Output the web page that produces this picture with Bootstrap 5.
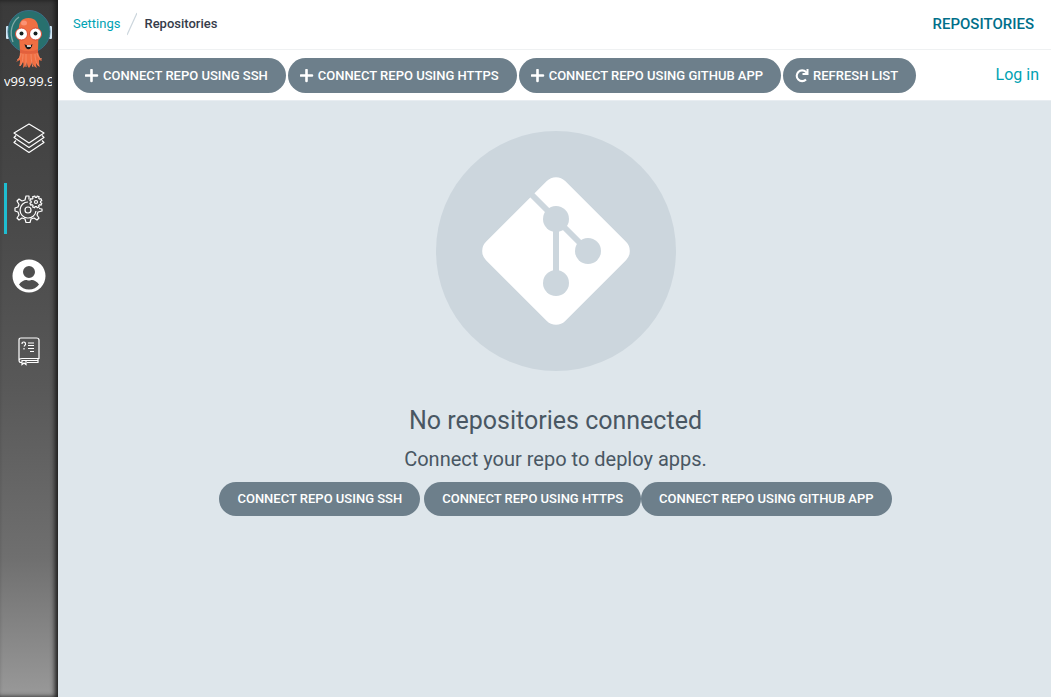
<!DOCTYPE html>
<html lang="en">
<head>
<meta charset="utf-8">
<meta name="viewport" content="width=device-width, initial-scale=1">
<title>Repositories</title>
<link href="https://cdn.jsdelivr.net/npm/bootstrap@5.3.0/dist/css/bootstrap.min.css" rel="stylesheet">
<style>
body { font-family: Roboto, "Liberation Sans", sans-serif; background: #dee6eb; color: #363c4a; line-height: 20px; }
a { color: #00a2b3; text-decoration: none; }
.side { width: 58px; background: linear-gradient(to bottom, #3a3a3a 0%, #484848 30%, #585858 55%, #6f6f6f 80%, #999 100%); box-shadow: inset -3px 0 5px 0 #1b1b1b; }
.side-brand { width: 48px; margin-left: 4px; height: 119px; padding-top: 9px; }
.side-brand svg { display: block; width: 48px; height: 62px; }
.version { font: 13px/20px "Open Sans", sans-serif; color: #fff; white-space: nowrap; }
.side-link { height: 51px; width: 48px; margin-left: 4px; border-left: 3px solid transparent; padding-right: 2px; }
.side-link.active { border-left-color: #1fbdd0; }
.side-list { gap: 20px; margin-top: -7px; }
.topbar { height: 50px; border-bottom: 1px solid #eff1f2; padding: 0 17px 1px 15px; }
.crumbs { font-size: 13px; }
.crumbs svg { margin: 0 7px; }
.crumbs strong { font-weight: 500; }
.page-name { font-size: 15px; font-weight: 500; color: #006f8a; text-transform: uppercase; }
.toolbar { min-height: 51px; border-bottom: 1px solid #e8edf1; padding: 0 12px 0 15px; }
.toolbar-actions { gap: 2px; }
.toolbar .login { font-size: 16px; }
.pill { font-size: 13px; font-weight: 500; line-height: 18px; color: #fff; background: #6d7f8b; border: 0; border-radius: 18px; padding: 8px 18px; text-transform: uppercase; white-space: nowrap; }
.pill:hover { color: #fff; background: #5d6f7b; }
.toolbar .pill { height: 35px; padding: 9px 18px 8px 12px; }
.toolbar .pill svg { width: 14px; height: 14px; margin-right: 4px; }
.empty { color: #495763; padding: 30px 0 0 2px; }
.empty h1 { font-size: 25px; line-height: 30px; font-weight: 400; margin: 35px 0 11px; }
.empty h2 { font-size: 20px; line-height: 24px; font-weight: 400; margin: 0 0 11px; }
</style>
</head>
<body>
<div class="d-flex min-vh-100">
  <nav class="side flex-shrink-0" aria-label="Main">
    <div class="side-brand overflow-hidden">
      <svg viewBox="0 0 48 62" aria-label="Argo">
        <rect x="2" y="17" width="3" height="13" rx="1" fill="#cfe6f5"/>
        <rect x="45" y="17" width="3" height="13" rx="1" fill="#cfe6f5"/>
        <circle cx="25" cy="22.500" r="21" fill="#28706e" stroke="#3b6f88"/>
        <path d="M9 33C5 23 8 13 15 8" fill="none" stroke="#83aaa7" stroke-width="1.300"/>
        <path d="M15 24C14 14 17 9 24.500 9S35 14 34.500 24L34 43c1 4 2 6 4 9l-3-1c0 3 0 5 1 7-3-1-4-3-4-6 0 3 0 5 1 7-3-1-4-3-5-6-1 3-2 5-3 6-2-2-2-4-2-6-1 3-2 5-4 6 0-2 1-4 0-6-1 2-2 4-4 4 1-2 1-4 1-6l-4 2c3-3 4-6 4-10z" fill="#f06f43"/>
        <path d="M17 43c0 5-2 7-4 8m6-6c0 6-1 9-3 12m6-12v13m5-13c0 6 1 10 2 13m2-13c0 6 2 10 4 12m-2-13c1 4 2 6 5 6" fill="none" stroke="#f58a65" stroke-width="1"/>
        <path d="M16 40c5 3 13 3 18 0v4c-5 1-13 1-18 0z" fill="#e2603d"/>
        <ellipse cx="20" cy="14" rx="3" ry="2.500" fill="#fb9274"/>
        <circle cx="17.500" cy="25" r="6" fill="#fff" stroke="#dd4d35"/>
        <circle cx="31.500" cy="25" r="6" fill="#fff" stroke="#dd4d35"/>
        <circle cx="17.500" cy="24.500" r="2" fill="#132020"/><circle cx="31.500" cy="24.500" r="2" fill="#132020"/>
        <path d="M20.500 35c3 2 5 2 8 0-1 7-7 7-8 0z" fill="#15191b"/><path d="M23 36.300h4v1.500h-4z" fill="#fff"/>
      </svg>
      <div class="version">v99.99.99</div>
    </div>
    <div class="side-list d-flex flex-column">
      <a class="side-link d-flex align-items-center justify-content-center" href="#" aria-label="Applications">
        <svg width="34" height="34" viewBox="0 0 34 34" fill="none" stroke="#fff" stroke-width="1.200" stroke-linejoin="round"><path d="M17 3 32 12 17 22 2 12z"/><path d="M4 14.500 2 16.500l15 10 15-10-2-2M4 19.500 2 21.500l15 10 15-10-2-2"/></svg>
      </a>
      <a class="side-link active d-flex align-items-center justify-content-center" href="#" aria-label="Settings">
        <svg width="30" height="30" viewBox="0 0 30 30" fill="none" stroke="#fff" stroke-width="1.200" stroke-linejoin="round"><path d="M15 5.500V2h-3l-1 4-3 1-3-2-2 2 2 3.500L4 13l-3 1v3l3 1 1 3-2 3 2 2 3-2 3 1 1 3.500h4l1-3.500 3-1 3 2 2-2-2-3 1-3 4-1v-2l-3-.500"/><path d="M14 8a8 8 0 1 0 8 9"/><circle cx="14" cy="16" r="3"/><circle cx="22" cy="8" r="1.500"/><path d="m20.800 2 .4 1.300h1.600l.4-1.300 2 .8-.6 1.300 1.100 1 1.300-.5.800 2-1.300.6v1.500l1.300.5-.8 2-1.300-.6-1.100 1.100.6 1.300-2 .8-.6-1.200h-1.500l-.5 1.200-2-.8.500-1.300-1-1.100-1.300.6-.9-2 1.300-.6V7.200l-1.300-.6.900-2 1.300.6 1-1.100-.6-1.300z"/></svg>
      </a>
      <a class="side-link d-flex align-items-center justify-content-center pb-2" href="#" aria-label="User Info">
        <svg width="34" height="34" viewBox="0 0 34 34"><path fill="#fff" fill-rule="evenodd" d="M17 .5a16.500 16.500 0 1 1 0 33 16.500 16.500 0 0 1 0-33zm0 6.500a6 6 0 1 0 0 12 6 6 0 0 0 0-12zM7 25.500c2 3 6 5 10 5s8-2 10-5c-2-3-5-4.500-7-4.500-1 0-1.500.5-3 .5s-2-.5-3-.5c-2 0-5 1.500-7 4.500z"/></svg>
      </a>
      <a class="side-link d-flex align-items-center justify-content-center" href="#" aria-label="Documentation">
        <svg width="22" height="30" viewBox="0 0 22 30" fill="none" stroke="#fff" stroke-width="1.200"><path d="M4 26.500H3q-2 0-2-2.500V4q0-2 2-2h15.500Q21 2 21 4v18.500H4q-3 0-3 2M9 26.500h11v-4M4 24.500h16M4 24v4.500l2-1.500L8 28.500V24"/><path d="M4 8q0-2 1.800-2T7.500 8.500l-1.500 2M6 12v1.500M10 7h6M10 9.500h6M10 12.500h6M12 15.500h4"/></svg>
      </a>
    </div>
  </nav>
  <div class="flex-grow-1">
    <header class="bg-white">
      <div class="topbar d-flex align-items-center justify-content-between">
        <nav class="crumbs d-flex align-items-center" aria-label="Breadcrumb">
          <a href="#">Settings</a>
          <svg width="10" height="24" viewBox="0 0 10 24" aria-hidden="true"><path d="M0 23 10 1" stroke="#ccd6dd" stroke-width="1.200"/></svg>
          <strong>Repositories</strong>
        </nav>
        <span class="page-name">Repositories</span>
      </div>
      <div class="toolbar d-flex align-items-center justify-content-between">
        <div class="toolbar-actions d-flex">
          <button class="btn pill d-flex align-items-center" type="button"><svg viewBox="0 0 14 14" aria-hidden="true"><path d="M6.500 1v11M1 6.500h11" stroke="#fff" stroke-width="2.600" stroke-linecap="round"/></svg>Connect repo using SSH</button>
          <button class="btn pill d-flex align-items-center" type="button"><svg viewBox="0 0 14 14" aria-hidden="true"><path d="M6.500 1v11M1 6.500h11" stroke="#fff" stroke-width="2.600" stroke-linecap="round"/></svg>Connect repo using HTTPS</button>
          <button class="btn pill d-flex align-items-center" type="button"><svg viewBox="0 0 14 14" aria-hidden="true"><path d="M6.500 1v11M1 6.500h11" stroke="#fff" stroke-width="2.600" stroke-linecap="round"/></svg>Connect repo using GitHub App</button>
          <button class="btn pill d-flex align-items-center" type="button"><svg viewBox="0 0 14 14" aria-hidden="true"><path d="M11 10.500a5.400 5.400 0 1 1 0-7.500l1 1" fill="none" stroke="#fff" stroke-width="2.100"/><path d="M13.500 0v6h-6V4h4V0z" fill="#fff"/></svg>Refresh list</button>
        </div>
        <a class="login" href="#">Log in</a>
      </div>
    </header>
    <main class="empty d-flex flex-column align-items-center text-center">
      <svg width="240" height="240" viewBox="0 0 240 240" aria-hidden="true">
        <circle cx="120" cy="120" r="120" fill="#ccd6dd"/>
        <rect x="64" y="64" width="112" height="112" rx="13" fill="#fff" transform="rotate(45 120 120)"/>
        <path d="M92 60 152 120M120 88v64" stroke="#ccd6dd" stroke-width="6" fill="none"/>
        <g fill="#ccd6dd"><circle cx="120" cy="88" r="13"/><circle cx="152" cy="120" r="13"/><circle cx="120" cy="152" r="13"/></g>
      </svg>
      <h1>No repositories connected</h1>
      <h2>Connect your repo to deploy apps.</h2>
      <div class="d-flex">
        <button class="btn pill me-1" type="button">Connect repo using SSH</button>
        <button class="btn pill" type="button">Connect repo using HTTPS</button>
        <button class="btn pill" type="button">Connect repo using GitHub App</button>
      </div>
    </main>
  </div>
</div>
<script src="https://cdn.jsdelivr.net/npm/bootstrap@5.3.0/dist/js/bootstrap.bundle.min.js"></script>
</body>
</html>
